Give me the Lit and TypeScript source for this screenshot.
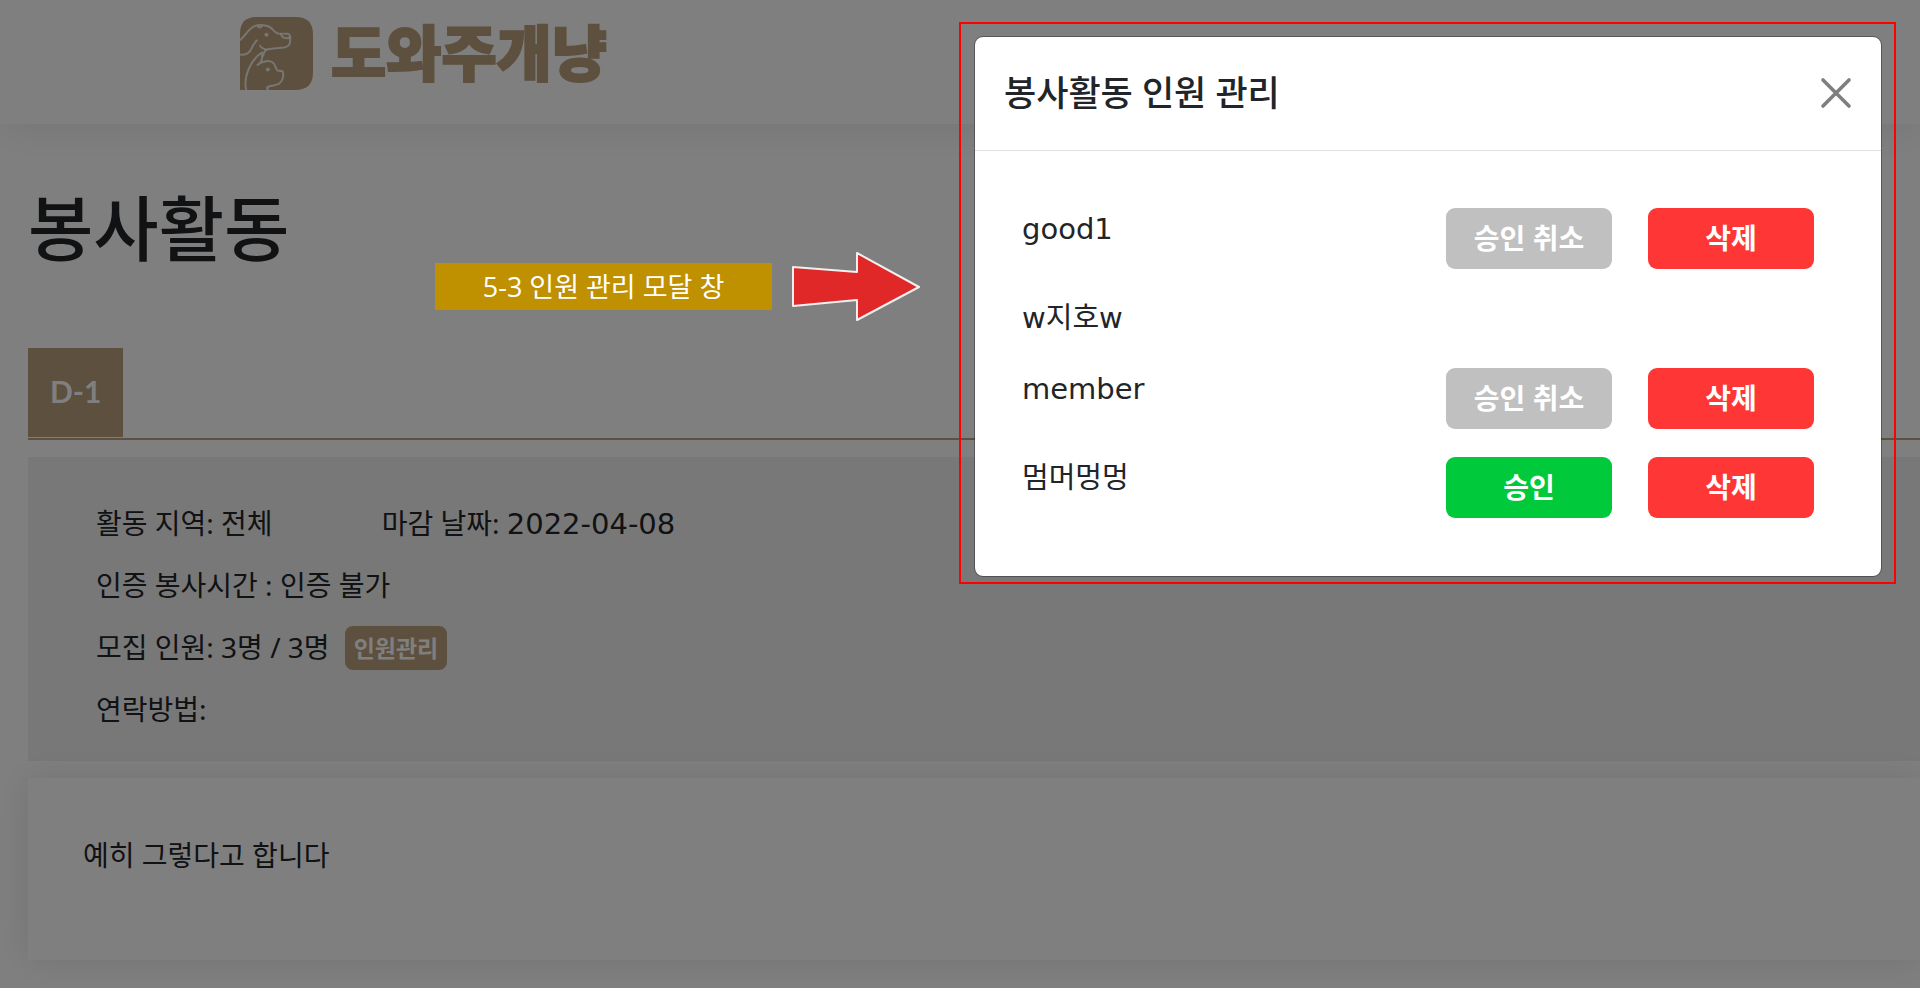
import { LitElement, html, css, svg, nothing } from "lit";
import { customElement, property, state } from "lit/decorators.js";

interface Member {
  name: string;
  status: "owner" | "approved" | "pending";
}

const kr = css`"Noto Sans CJK KR", sans-serif`;

@customElement("site-header")
class SiteHeader extends LitElement {
  static styles = css`
    :host {
      display: block;
      padding: 17px 240px 34px;
      background: #fff;
      box-shadow: 0 0 46px rgba(0, 0, 0, 0.1);
    }
    .brand {
      display: inline-flex;
      align-items: flex-start;
      gap: 18px;
      color: #baa07c;
      text-decoration: none;
      vertical-align: top;
    }
    .mark {
      display: block;
      width: 73px;
      height: 73px;
    }
    .word {
      font: 900 60px/65px ${kr};
      -webkit-text-stroke: 2px #baa07c;
    }
  `;

  render() {
    return html`
      <a class="brand" href="#">
        <svg class="mark" viewBox="0 0 218 218" aria-hidden="true">
          <path d="M0 50Q0 0 50 0H166Q218 0 218 52V166Q218 218 166 218H0Z" fill="#baa07c" />
          ${svg`<g fill="none" stroke="#fff" stroke-opacity=".8" stroke-width="6" stroke-linecap="round" stroke-linejoin="round">
            <path d="M1 68C14 60 22 38 42 28C60 21 84 24 93 33C101 41 105 48 113 49L143 50C153 53 150 65 149 78C147 86 141 89 132 91C112 93 94 93 78 98C71 95 62 92 60 86" />
            <path d="M1 112C18 115 29 107 35 93C40 80 44 78 50 70" />
            <path d="M54 29Q60 34 65 28M122 51C125 62 136 65 149 62" />
            <path d="M18 216C10 178 32 128 65 106C68 122 64 137 52 143C68 130 88 129 98 136C106 142 106 154 112 160L127 162C133 177 126 192 116 200C106 205 92 204 82 209C80 212 81 215 84 217M78 98Q70 106 69 116" />
          </g>
          <circle cx="79" cy="53" r="6" fill="#fff" fill-opacity=".8" />
          <circle cx="83" cy="157" r="6" fill="#fff" fill-opacity=".8" />`}
        </svg>
        <span class="word">도와주개냥</span>
      </a>
    `;
  }
}

@customElement("activity-page")
class ActivityPage extends LitElement {
  static styles = css`
    :host {
      display: block;
      color: #212529;
      font: 400 28px/43px "Noto Sans", ${kr};
    }
    .body {
      padding: 60px 0 28px 28px;
    }
    .title {
      margin: 0 0 76px;
      font-size: 71px;
      font-weight: 500;
      line-height: 88px;
    }
    .tabs {
      display: flex;
      padding-bottom: 1px;
      border-bottom: 2px solid #baa07c;
    }
    .badge {
      padding: 22px 22px 24px;
      background: #baa07c;
      color: #fff;
      font-family: Lato, ${kr};
      font-size: 30px;
      font-weight: 700;
    }
    .info {
      display: flex;
      flex-direction: column;
      gap: 19px;
      margin-top: 17px;
      padding: 45px 68px 30px;
      background: #f1f1f1;
    }
    .line {
      display: flex;
      align-items: center;
      height: 43px;
    }
    .region {
      margin-right: 109px;
    }
    .latin {
      font-family: "DejaVu Sans", ${kr};
      font-size: 29px;
      line-height: 1;
    }
    .manage {
      margin-left: 15px;
      padding: 0 9px;
      border: 0;
      border-radius: 8px;
      background: #baa07c;
      color: #fff;
      font: 700 23px/44px "Noto Sans", ${kr};
    }
    .content {
      margin-top: 17px;
      padding: 56px 55px 83px;
      background: #fff;
      box-shadow: 0 0 36px rgba(0, 0, 0, 0.1);
    }
    .content p {
      margin: 0;
    }
  `;

  render() {
    return html`
      <site-header></site-header>
      <main class="body">
        <h1 class="title">봉사활동</h1>
        <div class="tabs"><span class="badge">D-1</span></div>
        <section class="info">
          <div class="line">
            <span class="region">활동 지역: 전체</span>
            <span>마감 날짜: <span class="latin">2022-04-08</span></span>
          </div>
          <div class="line">인증 봉사시간 : 인증 불가</div>
          <div class="line">
            <span>모집 인원: 3명 / 3명</span>
            <button class="manage" type="button">인원관리</button>
          </div>
          <div class="line">연락방법:</div>
        </section>
        <section class="content"><p>예히 그렇다고 합니다</p></section>
      </main>
    `;
  }
}

@customElement("member-dialog")
class MemberDialog extends LitElement {
  @property({ attribute: false }) members: Member[] = [];

  static styles = css`
    :host {
      display: block;
      border: 1px solid rgba(0, 0, 0, 0.3);
      border-radius: 9px;
      background: #fff;
      background-clip: padding-box;
      color: #212529;
      font: 400 29px/43px "DejaVu Sans", ${kr};
    }
    .head {
      display: flex;
      align-items: center;
      justify-content: space-between;
      padding: 27px 29px 29px 29px;
      border-bottom: 1px solid #dee2e6;
    }
    .title {
      margin: 0;
      font: 500 35px/57px "Noto Sans", ${kr};
    }
    .close {
      display: block;
      padding: 0;
      border: 0;
      background: none;
      line-height: 0;
    }
    .close svg {
      width: 32px;
      height: 32px;
    }
    .list {
      display: flex;
      flex-direction: column;
      gap: 28px;
      margin: 0;
      padding: 57px 67px 58px 47px;
      list-style: none;
    }
    .row {
      display: flex;
      align-items: flex-start;
      gap: 36px;
    }
    .name {
      flex: 1;
    }
    .btn {
      width: 166px;
      padding: 0;
      border: 0;
      border-radius: 9px;
      color: #fff;
      font: 700 28px/61px "Noto Sans", ${kr};
    }
    .undo {
      background: #c0c0c0;
    }
    .approve {
      background: #00c93c;
    }
    .remove {
      background: #ff3636;
    }
  `;

  private actions(m: Member) {
    if (m.status === "owner") return nothing;
    return html`
      ${m.status === "approved"
        ? html`<button class="btn undo" type="button">승인 취소</button>`
        : html`<button class="btn approve" type="button">승인</button>`}
      <button class="btn remove" type="button">삭제</button>
    `;
  }

  render() {
    return html`
      <div class="head">
        <h2 class="title">봉사활동 인원 관리</h2>
        <button class="close" type="button" aria-label="닫기">
          <svg viewBox="0 0 32 32" aria-hidden="true">
            <path d="M3 3L29 29M29 3L3 29" fill="none" stroke="#7f7f7f" stroke-width="3.6" stroke-linecap="round" />
          </svg>
        </button>
      </div>
      <ul class="list">
        ${this.members.map(
          (m) => html`<li class="row"><span class="name">${m.name}</span>${this.actions(m)}</li>`
        )}
      </ul>
    `;
  }
}

@customElement("app-root")
class AppRoot extends LitElement {
  @state() private members: Member[] = [
    { name: "good1", status: "approved" },
    { name: "w지호w", status: "owner" },
    { name: "member", status: "approved" },
    { name: "멈머멍멍", status: "pending" },
  ];

  static styles = css`
    :host {
      display: block;
      position: relative;
      min-height: 100vh;
      overflow: hidden;
      background: #fff;
    }
    .backdrop {
      position: absolute;
      inset: 0;
      background: rgba(0, 0, 0, 0.5);
    }
    .frame {
      position: absolute;
      top: 22px;
      right: 24px;
      left: 959px;
      padding: 12px 12px 5px 13px;
      border: 2px solid #f00;
    }
    .callout {
      position: absolute;
      top: 251px;
      left: 435px;
      display: flex;
      align-items: center;
      gap: 19px;
    }
    .label {
      width: 337px;
      background: #bf9000;
      color: #fff;
      text-align: center;
      font: 400 27px/47px "Open Sans", ${kr};
    }
    .arrow {
      display: block;
      width: 130px;
      height: 71px;
    }
  `;

  render() {
    return html`
      <activity-page></activity-page>
      <div class="backdrop"></div>
      <div class="callout">
        <span class="label">5-3 인원 관리 모달 창</span>
        <svg class="arrow" viewBox="0 0 130 71" aria-hidden="true">
          <path d="M2 16L66 21V2L128 36L66 69V49L2 55Z" fill="#e02828" stroke="#f0f0f0" stroke-width="2" stroke-linejoin="round" />
        </svg>
      </div>
      <div class="frame"><member-dialog .members=${this.members}></member-dialog></div>
    `;
  }
}
